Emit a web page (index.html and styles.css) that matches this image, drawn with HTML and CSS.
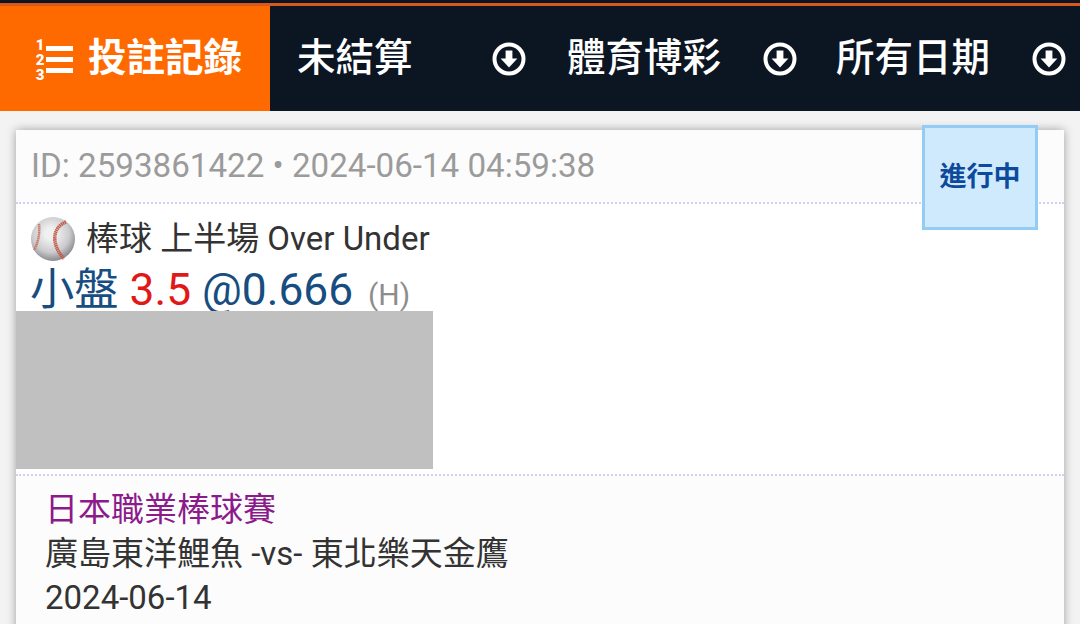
FILE: index.html
```html
<!DOCTYPE html>
<html lang="zh-Hant">
<head>
    <meta charset="UTF-8">
    <meta name="viewport" content="width=device-width, initial-scale=1.0">
    <title>投註記錄</title>
    <link rel="stylesheet" href="styles.css">
</head>
<body>
    <nav class="topbar">
        <div class="tab-title">
            <div class="list-icon">
                <span class="list-num">123</span>
                <svg width="27" height="32" viewBox="0 0 27 32">
                    <rect x="0" y="3" width="27" height="5" fill="#fff"/>
                    <rect x="0" y="14" width="27" height="5" fill="#fff"/>
                    <rect x="0" y="25" width="27" height="5" fill="#fff"/>
                </svg>
            </div>
            <span class="tab-label">投註記錄</span>
        </div>
        <div class="filter filter-status">
            <span class="tab-label">未結算</span>
            <svg class="down-icon" width="34" height="34" viewBox="0 0 34 34">
                <circle cx="17" cy="17" r="14.5" fill="none" stroke="#fff" stroke-width="4"/>
                <path d="M13.6 8.5h6.8v8h5L17 25.5 8.600 16.500h5z" fill="#fff"/>
            </svg>
        </div>
        <div class="filter filter-sport">
            <span class="tab-label">體育博彩</span>
            <svg class="down-icon" width="34" height="34" viewBox="0 0 34 34">
                <circle cx="17" cy="17" r="14.5" fill="none" stroke="#fff" stroke-width="4"/>
                <path d="M13.6 8.5h6.8v8h5L17 25.5 8.600 16.500h5z" fill="#fff"/>
            </svg>
        </div>
        <div class="filter filter-date">
            <span class="tab-label">所有日期</span>
            <svg class="down-icon" width="34" height="34" viewBox="0 0 34 34">
                <circle cx="17" cy="17" r="14.5" fill="none" stroke="#fff" stroke-width="4"/>
                <path d="M13.6 8.5h6.8v8h5L17 25.5 8.600 16.500h5z" fill="#fff"/>
            </svg>
        </div>
    </nav>

    <main class="card">
        <div class="status-badge">進行中</div>
        <div class="card-head">ID: 2593861422 • 2024-06-14 04:59:38</div>
        <div class="bet">
            <div class="bet-type">
                <svg class="ball" width="44" height="44" viewBox="0 0 44 44">
                    <defs>
                        <radialGradient id="ballShade" cx="0.45" cy="0.38" r="0.65">
                            <stop offset="0.2" stop-color="#f0f0f1"/>
                            <stop offset="0.65" stop-color="#cbcbce"/>
                            <stop offset="1" stop-color="#808084"/>
                        </radialGradient>
                    </defs>
                    <circle cx="22" cy="22" r="22" fill="url(#ballShade)"/>
                    <path d="M8 7C9 17 7 26 3 33" fill="none" stroke="#c77a68" stroke-width="2.500" stroke-dasharray="1.500 0.500"/>
                    <path d="M35 5C22 10 19 26 33 42" fill="none" stroke="#c25c4a" stroke-width="3.500" stroke-dasharray="1.500 0.500"/>
                </svg>
                <span>棒球 上半場 Over Under</span>
            </div>
            <div class="pick">
                小盤 <span class="pick-line">3.5</span> @0.666 <span class="pick-tag">(H)</span>
            </div>
        </div>
        <div class="redacted"></div>
        <div class="match">
            <div class="league">日本職業棒球賽</div>
            <div class="teams">廣島東洋鯉魚 -vs- 東北樂天金鷹</div>
            <div class="match-date">2024-06-14</div>
        </div>
    </main>
</body>
</html>
```
FILE: styles.css
```css
body {
    margin: 0;
    height: 624px;
    overflow: hidden;
    background: #f3f3f3;
    font-family: Roboto, "Noto Sans CJK TC", sans-serif;
}

.topbar {
    display: flex;
    height: 105px;
    background: #0c1522;
    border-top: 3px solid #0c1522;
    box-shadow: inset 0 3px 0 #d9581c;
    padding-top: 3px;
    color: #fff;
    font-family: "Noto Sans CJK TC", sans-serif;
    font-size: 38.5px;
    font-weight: 500;
}

.tab-label {
    padding-bottom: 9px;
    white-space: nowrap;
}

.tab-title {
    width: 270px;
    background: #ff6a00;
    display: flex;
    align-items: center;
    box-sizing: border-box;
    padding-left: 34px;
    gap: 15px;
    font-weight: 700;
}

.list-icon {
    display: flex;
    align-items: center;
    gap: 1px;
    flex: none;
}

.list-num {
    writing-mode: vertical-rl;
    text-orientation: upright;
    font-family: Roboto, sans-serif;
    font-size: 15px;
    font-weight: 900;
    line-height: 11px;
    letter-spacing: -3px;
}

.filter {
    display: flex;
    align-items: center;
    box-sizing: border-box;
}

.filter-status {
    width: 256px;
    padding-left: 27px;
    gap: 79.5px;
}

.filter-sport {
    width: 270px;
    padding-left: 41px;
    gap: 42px;
}

.filter-date {
    padding-left: 40px;
    gap: 42px;
}

.down-icon {
    flex: none;
}

.card {
    position: relative;
    margin: 19px 16px 0;
    height: 520px;
    background: #fff;
    box-shadow: 0 0 9px rgba(0, 0, 0, 0.35);
}

.status-badge {
    position: absolute;
    top: -5px;
    right: 26px;
    width: 116px;
    height: 105px;
    box-sizing: border-box;
    display: flex;
    align-items: center;
    justify-content: center;
    padding-bottom: 6px;
    background: #cfe9fd;
    border: 3px solid #93cdf5;
    color: #0d4a9c;
    font-family: "Noto Sans CJK TC", sans-serif;
    font-size: 27px;
    font-weight: 700;
}

.card-head {
    height: 74px;
    box-sizing: border-box;
    padding: 14px 0 0 15px;
    background: #fcfcfc;
    border-bottom: 2px dotted #cdd2f0;
    color: #9b9b9b;
    font-size: 33.15px;
    line-height: 44px;
}

.bet {
    padding: 13px 15px 0;
    height: 107px;
    box-sizing: border-box;
}

.bet-type {
    display: flex;
    align-items: center;
    gap: 11px;
    color: #333;
    font-size: 33px;
    line-height: 44px;
}

.pick {
    color: #174d80;
    font-size: 44.3px;
    line-height: 52px;
    margin: 3px 0 0 -1px;
    white-space: nowrap;
}

.pick-line {
    color: #e01818;
}

.pick-tag {
    color: #8d8d8d;
    font-size: 30px;
    margin-left: 4px;
}

.redacted {
    position: relative;
    width: 417px;
    height: 158px;
    background: #c0c0c0;
}

.match {
    margin-top: 5px;
    padding: 12px 29px 0;
    height: 150px;
    box-sizing: border-box;
    background: #fcfcfc;
    border-top: 2px dotted #cdd2f0;
    color: #333;
    font-size: 33px;
    line-height: 44px;
}

.league {
    color: #8b1a8b;
}
```
